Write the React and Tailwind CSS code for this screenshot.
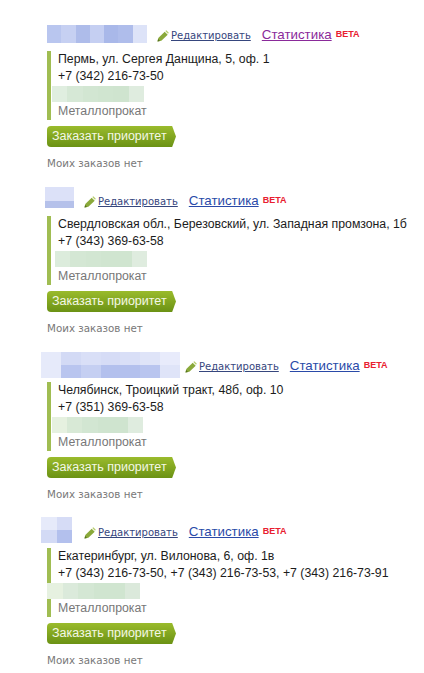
import React from "react";

const cards = [
  {
    top: "mt-[25px]",
    headerH: "h-[26px]",
    nameBox: "ml-[47px] w-[100px] h-[18px]",
    nameRows: [["#b9c6ef", "#c6d0f2", "#aebcea", "#c5cff2", "#a9b8e9", "#afbdeb", "#dde3f8"]],
    linksGap: "ml-[10px] pb-[7px]",
    visited: true,
    address: "Пермь, ул. Сергея Данщина, 5, оф. 1",
    phones: "+7 (342) 216-73-50",
    greenBox: "-ml-[6px] w-[92px]",
    green: ["#e0eee0", "#d6e8d6", "#d2e6d2", "#d0e5d0", "#cfe4cf", "#dfecdf"],
  },
  {
    top: "mt-[18px]",
    headerH: "h-[29px]",
    nameBox: "ml-[45px] w-[29px] h-[21px]",
    nameRows: [["#dce1f8"], ["#dce1f8"], ["#b5c1ea"]],
    linksGap: "ml-[10px] pb-[6px]",
    address: "Свердловская обл., Березовский, ул. Западная промзона, 1б",
    phones: "+7 (343) 369-63-58",
    greenBox: "-ml-[3px] w-[92px]",
    green: ["#dcecdc", "#d4e7d4", "#d2e6d2", "#d0e5d0", "#d0e5d0", "#dfecdf"],
  },
  {
    top: "mt-[18px]",
    headerH: "h-[30px]",
    nameBox: "ml-[41px] w-[139px] h-[26px]",
    nameRows: [
      ["#e6eafa", "#d3daf5", "#d9dff7", "#d6dcf6", "#d9dff7", "#dfe4f8", "#e8ebfb"],
      ["#e6eafa", "#b9c5ef", "#c5cff2", "#b3c0ed", "#b3c0ed", "#b9c5ef", "#dfe4f8"],
    ],
    linksGap: "ml-[5px] pb-[7px]",
    address: "Челябинск, Троицкий тракт, 48б, оф. 10",
    phones: "+7 (351) 369-63-58",
    greenBox: "-ml-[6px] w-[91px]",
    green: ["#e6f1e0", "#d8e9d6", "#d2e6d2", "#cfe4cf", "#cfe4cf", "#dfecdf"],
  },
  {
    top: "mt-[17px]",
    headerH: "h-[31px]",
    nameBox: "ml-[41px] w-[31px] h-[26px]",
    nameRows: [
      ["#e6eafa", "#d6dcf6"],
      ["#d3daf5", "#b3c0ed"],
    ],
    linksGap: "ml-[12px] pb-[7px]",
    address: "Екатеринбург, ул. Вилонова, 6, оф. 1в",
    phones: "+7 (343) 216-73-50, +7 (343) 216-73-53, +7 (343) 216-73-91",
    greenBox: "-ml-[11px] w-[93px]",
    green: ["#e6f1e0", "#dbeadb", "#d4e7d4", "#d0e5d0", "#d0e5d0", "#dbe9db"],
  },
];

function Pencil() {
  return (
    <svg width="12" height="12" viewBox="0 0 12 12" className="block">
      <path d="M0.500 11.500l0.800-3.400 6.400-6.400 3 3-6.400 6z" fill="#8aa93a" />
      <path d="M8.300 1l1-.8 2.500 2.500-.8 1.100z" fill="#b5cc6a" />
      <path d="M0.500 11.500l.6-2.500 1.900 1.900z" fill="#55701f" />
    </svg>
  );
}

function Card({ card }) {
  return (
    <div className={card.top}>
      <div className={`flex items-start ${card.headerH}`}>
        <div className={`flex flex-col shrink-0 blur-[0.6px] ${card.nameBox}`}>
          {card.nameRows.map((row, i) => (
            <div key={i} className="flex flex-1">
              {row.map((c, j) => (
                <div key={j} className="flex-1" style={{ backgroundColor: c }} />
              ))}
            </div>
          ))}
        </div>
        <div className={`self-end flex items-center whitespace-nowrap ${card.linksGap}`}>
          <span className="mr-[2px] w-[12px]"><Pencil /></span>
          <a className="font-['DejaVu_Sans',sans-serif] text-[10px] leading-[14px] text-[#36467d] underline">Редактировать</a>
          <a className={`ml-[11px] -translate-y-[1px] font-['Liberation_Sans',sans-serif] text-[13.300px] leading-[16px] underline ${card.visited ? "text-[#8a2a9a]" : "text-[#2a4aa8]"}`}>Статистика</a>
          <span className="ml-[4px] -translate-y-[2px] font-['Liberation_Sans',sans-serif] text-[9px] leading-[12px] font-bold text-[#e8202f]">BETA</span>
        </div>
      </div>
      <div className="ml-[47px] mr-2 border-l-[4px] border-[#a0bd52] pl-[7px] h-[69px] font-['Liberation_Sans',sans-serif] text-[12.300px] leading-[17px] text-[#1c1c1c] whitespace-nowrap">
        <div>{card.address}</div>
        <div>{card.phones}</div>
        <div className={`flex h-[16px] mt-[1px] blur-[0.6px] ${card.greenBox}`}>
          {card.green.map((c, i) => (
            <div key={i} className="flex-1" style={{ backgroundColor: c }} />
          ))}
        </div>
        <div className="mt-[1px] text-[#777777]">Металлопрокат</div>
      </div>
      <div className="ml-[47px] mt-[6px] w-[129px] h-[21px] rounded-l-[4px] bg-gradient-to-b from-[#9abb2c] to-[#6b9214] [clip-path:polygon(0_0,97%_0,100%_50%,97%_100%,0_100%)] pl-[5px] font-['Liberation_Sans',sans-serif] text-[12.500px] leading-[21px] text-[#f4f8e6]">
        Заказать приоритет
      </div>
      <div className="ml-[47px] mt-[10px] font-['DejaVu_Sans',sans-serif] text-[10.300px] leading-[12px] text-[#777777]">Моих заказов нет</div>
    </div>
  );
}

export default function App() {
  return (
    <div className="w-[424px] h-[673px] overflow-hidden bg-white pt-px">
      <div className="-mt-px">
        {cards.map((card, i) => (
          <Card key={i} card={card} />
        ))}
      </div>
    </div>
  );
}
